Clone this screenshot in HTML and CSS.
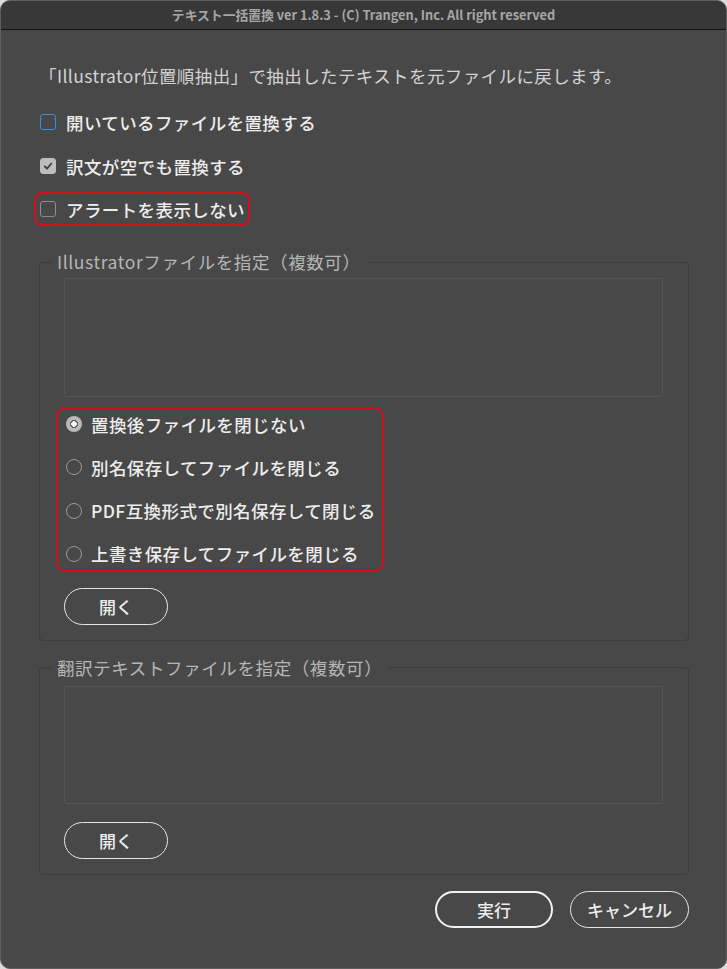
FILE: index.html
```html
<!DOCTYPE html>
<html lang="ja">
<head>
<meta charset="utf-8">
<title>テキスト一括置換</title>
<link rel="stylesheet" href="styles.css">
</head>
<body>
<div class="window">
  <header class="titlebar">テキスト一括置換 ver 1.8.3 - (C) Trangen, Inc. All right reserved</header>
  <main class="content">
    <p class="intro">「Illustrator位置順抽出」で抽出したテキストを元ファイルに戻します。</p>
    <div class="checks">
      <label class="check"><span class="box box-focus"></span><span class="label">開いているファイルを置換する</span></label>
      <label class="check"><span class="box box-on"><svg viewBox="0 0 16 16" width="16" height="16"><path d="M4.2 8.3 L6.9 11 L11.8 5.2" fill="none" stroke="#3e3e3e" stroke-width="2" stroke-linecap="round" stroke-linejoin="round"/></svg></span><span class="label">訳文が空でも置換する</span></label>
      <label class="check check-hl"><span class="box"></span><span class="label">アラートを表示しない</span></label>
    </div>

    <fieldset class="group group-ai">
      <legend class="legend">Illustratorファイルを指定（複数可）</legend>
      <div class="listbox"></div>
      <div class="radios">
        <label class="radio"><span class="dot dot-on"></span><span class="label">置換後ファイルを閉じない</span></label>
        <label class="radio"><span class="dot"></span><span class="label">別名保存してファイルを閉じる</span></label>
        <label class="radio"><span class="dot"></span><span class="label">PDF互換形式で別名保存して閉じる</span></label>
        <label class="radio"><span class="dot"></span><span class="label">上書き保存してファイルを閉じる</span></label>
      </div>
      <button class="btn btn-open">開く</button>
    </fieldset>

    <fieldset class="group group-txt">
      <legend class="legend">翻訳テキストファイルを指定（複数可）</legend>
      <div class="listbox listbox-txt"></div>
      <button class="btn btn-open btn-open-txt">開く</button>
    </fieldset>

    <div class="actions">
      <button class="btn btn-default">実行</button>
      <button class="btn btn-cancel">キャンセル</button>
    </div>
  </main>
</div>
</body>
</html>
```
FILE: styles.css
```css
* { box-sizing: border-box; }
html, body { margin: 0; padding: 0; }
body {
  background: #dcdcdc;
  font-family: "Noto Sans CJK JP", "Noto Sans", sans-serif;
}
.window {
  width: 727px;
  height: 969px;
  background: #484848;
  border: 1px solid #5e5e5e;
  border-radius: 10px;
  overflow: hidden;
  display: flex;
  flex-direction: column;
}
.titlebar {
  height: 29px;
  background: #383838;
  border-bottom: 1px solid #141414;
  color: #a6a6a6;
  font-size: 12.8px;
  font-weight: 700;
  letter-spacing: 0;
  text-align: center;
  line-height: 27px;
}
.content {
  flex: 1;
  padding: 34px 37px 0 38px;
  display: flex;
  flex-direction: column;
}
.intro {
  margin: 0;
  height: 24px;
  line-height: 24px;
  font-size: 17.5px;
  letter-spacing: 0.4px;
  color: #d2d2d2;
  white-space: nowrap;
}
.checks {
  margin-top: 22px;
  display: flex;
  flex-direction: column;
  align-items: flex-start;
  gap: 20px;
}
.check, .radio {
  display: flex;
  align-items: center;
  height: 24px;
  gap: 10px;
  font-size: 17.5px;
  letter-spacing: 0.4px;
  font-weight: 500;
  color: #ededed;
  white-space: nowrap;
}
.check { margin-left: 1px; }
.check-hl {
  margin-top: -6px;
  margin-left: -5px;
  width: 216px;
  height: 34px;
  padding: 3px 6px 3px 4px;
  border: 2px solid #d0101f;
  border-radius: 8px;
}
.box {
  width: 16px;
  height: 16px;
  flex: none;
  border: 1.5px solid #8c8c8c;
  border-radius: 3px;
  display: flex;
  align-items: center;
  justify-content: center;
}
.box svg { display: block; }
.box-focus { border-color: #3d8ae6; }
.box-on { background: #bdbdbd; border-color: #bdbdbd; }

.group {
  margin: 24px 0 0 0;
  min-width: 0;
  width: 650px;
  border: 1px solid #3d3d3d;
  border-radius: 4px;
  padding: 0 25px 15px 24px;
}
.group-txt { margin-top: 15px; }
.legend {
  margin-left: -13px;
  padding: 0 6px;
  height: 24px;
  line-height: 24px;
  font-size: 17.5px;
  letter-spacing: 0.6px;
  color: #b6b6b6;
  white-space: nowrap;
}
.listbox {
  margin-top: 4px;
  height: 119px;
  border: 1px solid #555555;
  border-radius: 3px;
  background: #484848;
}
.listbox-txt { margin-top: 6px; height: 118px; }
.radios {
  margin-top: 10px;
  margin-left: -8px;
  width: 328px;
  border: 2px solid #d0101f;
  border-radius: 9px;
  padding: 3px 0 4px 8px;
  display: flex;
  flex-direction: column;
  gap: 19.33px;
}
.radio { gap: 9px; }
.dot {
  width: 16px;
  height: 16px;
  flex: none;
  border: 1.5px solid #9a9a9a;
  border-radius: 50%;
}
.dot-on {
  border: none;
  background: radial-gradient(circle, #f4f4f4 0 2.6px, #5c5c5c 3px 3.8px, #b9b9b9 4.3px);
}
.btn {
  font-family: "Noto Sans CJK JP", "Noto Sans", sans-serif;
  background: transparent;
  color: #ededed;
  font-size: 17px;
  font-weight: 500;
  height: 37px;
  border: 1.5px solid #e6e6e6;
  border-radius: 19px;
  padding: 0;
  line-height: 1;
}
.btn-open {
  display: block;
  margin-top: 16px;
  width: 104px;
}
.btn-open-txt { margin-top: 18px; }
.actions {
  margin-top: 16px;
  display: flex;
  justify-content: flex-end;
  gap: 17px;
}
.btn-default { width: 118px; border: 2px solid #f2f2f2; }
.btn-cancel { width: 119px; }
```
